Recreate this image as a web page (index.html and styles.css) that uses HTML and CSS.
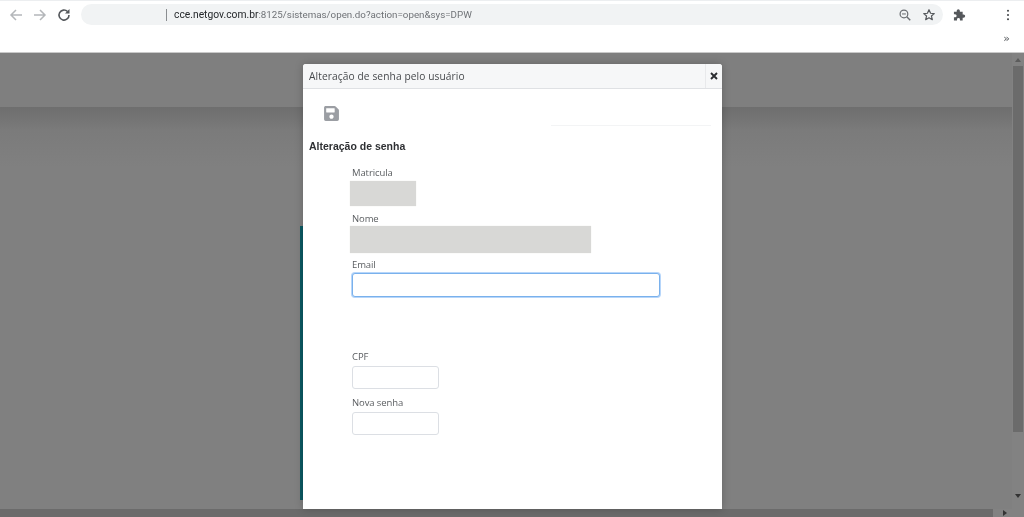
FILE: index.html
```html
<!DOCTYPE html>
<html lang="pt-BR">
<head>
<meta charset="utf-8">
<title>Alteração de senha</title>
<link rel="stylesheet" href="styles.css">
</head>
<body>
<header class="chrome">
  <div class="toolbar">
    <svg class="nav-icon back" viewBox="0 0 16 16"><path d="M14 8H3M8 3L3 8l5 5" fill="none" stroke="#b4b7ba" stroke-width="1.5"/></svg>
    <svg class="nav-icon fwd" viewBox="0 0 16 16"><path d="M2 8h11M8 3l5 5-5 5" fill="none" stroke="#b4b7ba" stroke-width="1.5"/></svg>
    <svg class="nav-icon reload" viewBox="0 0 16 16"><path d="M13 8a5 5 0 1 1-1.5-3.5" fill="none" stroke="#55585c" stroke-width="1.6"/><path d="M13.5 2v4.5H9z" fill="#55585c"/></svg>
    <div class="omnibox">
      <span class="divider"></span>
      <span class="url"><span class="host">cce.netgov.com.br</span>:8125/sistemas/open.do?action=open&amp;sys=DPW</span>
      <svg class="omni-icon zoom-out" viewBox="0 0 16 16"><circle cx="6.8" cy="6.8" r="4.4" fill="none" stroke="#6b6e72" stroke-width="1.4"/><path d="M10 10l4 4" stroke="#6b6e72" stroke-width="1.6"/><path d="M4.6 6.8h4.4" stroke="#6b6e72" stroke-width="1.2"/></svg>
      <svg class="omni-icon star" viewBox="0 0 16 16"><path d="M8 2l1.8 4 4.2.4-3.2 2.8 1 4.2L8 11.2l-3.8 2.2 1-4.2L2 6.4 6.2 6z" fill="none" stroke="#55585c" stroke-width="1.4" stroke-linejoin="round"/></svg>
    </div>
    <svg class="puzzle" viewBox="0 0 14 14"><path d="M1 4h3V3a1.7 1.7 0 0 1 3.4 0v1h3v3h1a1.7 1.7 0 0 1 0 3.4h-1V13.500H7.500v-1.200a1.600 1.600 0 0 0-3.200 0v1.200H1V10h1.200a1.700 1.700 0 0 0 0-3.400H1z" fill="#55585c"/></svg>
    <svg class="kebab" viewBox="0 0 4 14"><circle cx="2" cy="2" r="1.250" fill="#4a4d50"/><circle cx="2" cy="7" r="1.250" fill="#4a4d50"/><circle cx="2" cy="12" r="1.250" fill="#4a4d50"/></svg>
  </div>
  <div class="bookmarks"><span class="more">»</span></div>
</header>

<div class="viewport">
  <div class="page-row">
    <main class="page">
      <div class="page-band"></div>
      <div class="page-shade"></div>
    </main>
    <div class="vscroll">
      <span class="arrow-up"></span>
      <span class="vthumb"></span>
      <span class="arrow-down"></span>
    </div>
  </div>
  <div class="hscroll"><span class="hthumb"></span><span class="arrow-right"></span></div>

  <span class="teal-edge"></span>

  <section class="modal">
    <div class="modal-head">
      <h1 class="modal-title">Alteração de senha pelo usuário</h1>
      <div class="modal-close">
        <svg viewBox="0 0 8 8"><path d="M1 1l6 6M7 1L1 7" stroke="#2b2d30" stroke-width="1.900"/></svg>
      </div>
    </div>
    <div class="modal-body">
      <div class="tools">
        <svg class="save" viewBox="0 0 448 512"><path d="M433.900 129.900l-83.900-83.900A48 48 0 0 0 316.100 32H48C21.500 32 0 53.500 0 80v352c0 26.500 21.500 48 48 48h352c26.500 0 48-21.500 48-48V163.900a48 48 0 0 0-14.100-34zM224 416c-35.300 0-64-28.700-64-64s28.700-64 64-64 64 28.700 64 64-28.700 64-64 64zm96-304.500V212c0 6.600-5.400 12-12 12H76c-6.600 0-12-5.400-12-12V108c0-6.600 5.400-12 12-12h228.500c3.200 0 6.200 1.300 8.500 3.500l3.500 3.500c2.200 2.200 3.500 5.300 3.500 8.500z" fill="#9b9ea3"/></svg>
        <span class="tools-line"></span>
      </div>
      <h2 class="section-title">Alteração de senha</h2>
      <form class="form">
        <div class="field matricula">
          <label class="label">Matricula</label>
          <div class="locked locked-short"></div>
        </div>
        <div class="field nome">
          <label class="label">Nome</label>
          <div class="locked locked-long"></div>
        </div>
        <div class="field email">
          <label class="label">Email</label>
          <div class="input input-focus"></div>
        </div>
        <div class="field cpf">
          <label class="label">CPF</label>
          <div class="input input-short"></div>
        </div>
        <div class="field senha">
          <label class="label">Nova senha</label>
          <div class="input input-short"></div>
        </div>
      </form>
    </div>
  </section>
</div>
</body>
</html>
```
FILE: styles.css
```css
* { box-sizing: border-box; }
html, body { margin: 0; height: 100%; overflow: hidden; }
body {
  width: 1024px;
  height: 517px;
  display: flex;
  flex-direction: column;
  font-family: "Open Sans", "Noto Sans", sans-serif;
  background: #fff;
  filter: blur(.35px);
}

/* browser chrome */
.chrome { flex: none; height: 53px; background: #fff; border-bottom: 1px solid #c9c9c9; }
.toolbar {
  height: 30px;
  padding-bottom: 2px;
  display: flex;
  align-items: center;
  border-top: 1px solid #eceef0;
}
.nav-icon { width: 16px; height: 16px; flex: none; }
.back { margin-left: 8px; }
.fwd { margin-left: 8px; }
.reload { margin-left: 8px; }
.omnibox {
  margin-left: 9px;
  width: 862px;
  height: 21px;
  border-radius: 11px;
  background: #f1f3f4;
  display: flex;
  align-items: center;
  position: relative;
}
.divider { margin-left: 85px; width: 1px; height: 12px; background: #8a8d90; flex: none; }
.url {
  margin-left: 7px;
  font-family: Roboto, "Liberation Sans", sans-serif;
  font-size: 9.770px;
  color: #6f7276;
  white-space: nowrap;
  flex: 1;
}
.host { color: #25282b; font-size: 10.300px; }
.omni-icon { width: 14px; height: 14px; flex: none; }
.zoom-out { margin-right: 10px; }
.star { margin-right: 7px; }
.puzzle { width: 13px; height: 13px; margin-left: 10px; flex: none; }
.kebab { width: 4px; height: 12px; margin-left: 40px; flex: none; }
.bookmarks { height: 22px; display: flex; align-items: center; justify-content: flex-end; padding: 0 14px 6px 0; }
.more { font-family: "DejaVu Sans", sans-serif; font-size: 11px; line-height: 11px; color: #55585c; }

/* dimmed page */
.viewport { flex: 1; min-height: 0; position: relative; display: flex; flex-direction: column; }
.page-row { flex: 1; min-height: 0; display: flex; }
.page { flex: 1; display: flex; flex-direction: column; background: #808080; }
.page-band { height: 54px; flex: none; background: #7f7f7f; }
.page-shade { flex: 1; background: linear-gradient(#6e6e6e, #7b7b7b 24px, #808080 60px); }
.vscroll {
  width: 12px;
  flex: none;
  background: #828282;
  display: flex;
  flex-direction: column;
  align-items: center;
}
.arrow-up {
  margin-top: 5px;
  width: 0; height: 0;
  border: 3.500px solid transparent;
  border-top: 0;
  border-bottom: 4px solid #5c5c5c;
}
.vthumb { margin-top: 4px; width: 10px; height: 366px; background: #6b6b6b; }
.arrow-down {
  margin-top: auto;
  margin-bottom: 11px;
  width: 0; height: 0;
  border: 3.500px solid transparent;
  border-bottom: 0;
  border-top: 4px solid #333;
}
.hscroll {
  height: 8px;
  flex: none;
  background: #828282;
  display: flex;
  align-items: center;
}
.hthumb { width: 993px; height: 8px; flex: none; background: #6b6b6b; }
.arrow-right {
  margin-left: 10px;
  width: 0; height: 0;
  border: 3.500px solid transparent;
  border-right: 0;
  border-left: 4px solid #333;
}
.teal-edge { position: absolute; left: 300px; top: 173px; width: 3px; height: 274px; background: #0b5a63; }

/* modal */
.modal {
  position: absolute;
  left: 303px;
  top: 11px;
  width: 419px;
  height: 445px;
  background: #fff;
  border-radius: 3px 3px 0 0;
  box-shadow: 0 0 8px rgba(0, 0, 0, .22);
  display: flex;
  flex-direction: column;
}
.modal-head {
  flex: none;
  height: 25px;
  display: flex;
  background: #f6f7f8;
  border-bottom: 1px solid #dfe1e4;
  border-radius: 3px 3px 0 0;
}
.modal-title {
  flex: 1;
  margin: 0;
  padding-left: 6px;
  font-size: 10.200px;
  line-height: 25px;
  font-weight: 400;
  letter-spacing: .1px;
  color: #46494c;
}
.modal-close { width: 17px; display: flex; align-items: center; justify-content: center; border-left: 1px solid #e8e9eb; }
.modal-close svg { width: 8px; height: 8px; }
.modal-body { flex: 1; padding: 0 6px; position: relative; }
.tools { height: 37px; display: flex; align-items: flex-start; position: relative; }
.save { width: 15px; height: 17px; margin: 15.500px 0 0 15px; flex: none; }
.tools-line { margin: 36px 0 0 212px; width: 160px; height: 1px; background: #f3f4f5; }
.section-title {
  margin: 13px 0 0;
  font-family: "Liberation Sans", Arial, sans-serif;
  font-size: 10.500px;
  line-height: 14px;
  font-weight: 700;
  color: #2e3033;
}
.form { margin-left: 41px; display: flex; flex-direction: column; }
.field { display: flex; flex-direction: column; align-items: flex-start; }
.label {
  display: block;
  height: 14px;
  font-size: 9.500px;
  line-height: 16px;
  letter-spacing: -.1px;
  color: #5a5d60;
  margin-left: 2px;
}
.matricula { margin-top: 12px; }
.locked { background: #d8d8d6; box-shadow: 0 0 1px #e4e4e2; }
.locked-short { width: 66px; height: 25px; margin-top: 2px; }
.nome { margin-top: 5px; }
.locked-long { width: 241px; height: 27px; margin-top: 1px; }
.email { margin-top: 4px; }
.input { margin: 3px 0 0 2px; background: #fff; border: 1px solid #dcdfe4; border-radius: 3px; }
.input-focus { width: 308px; height: 24px; border-color: #7ab1ec; box-shadow: 0 0 0 1px #b7d6fa; margin-top: 2px; }
.input-short { width: 87px; height: 23px; }
.cpf { margin-top: 52px; }
.senha { margin-top: 6px; }
```
